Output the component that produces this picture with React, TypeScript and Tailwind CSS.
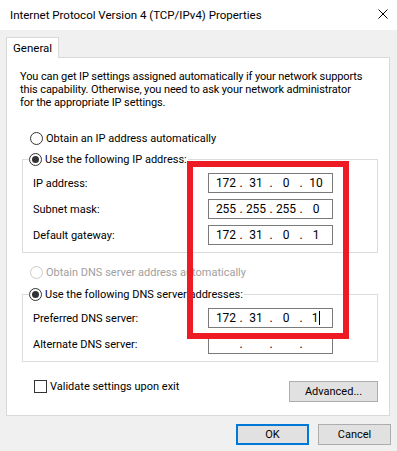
import React from "react";

function Radio({ checked, disabled }: { checked?: boolean; disabled?: boolean }) {
  return (
    <span
      className={`w-[13px] h-[13px] rounded-full border bg-white flex items-center justify-center shrink-0 ${
        disabled ? "border-[#cccccc]" : "border-[#333333]"
      }`}
    >
      {checked && <span className="w-[7px] h-[7px] rounded-full bg-[#333333]" />}
    </span>
  );
}

function IpBox({ parts, cursor }: { parts: string[]; cursor?: boolean }) {
  return (
    <div className="w-[125px] h-[20px] border border-[#7a7a7a] bg-white flex items-center pl-[6px] text-[12px]">
      {parts.map((p, i) => (
        <React.Fragment key={i}>
          {i > 0 && <span className="w-[8px] text-center">.</span>}
          <span className="w-[22px] text-center flex items-center justify-center">
            {p}
            {cursor && i === 3 && <span className="inline-block w-px h-[14px] bg-black ml-[1px]" />}
          </span>
        </React.Fragment>
      ))}
    </div>
  );
}

function Row({ label, parts, cursor }: { label: string; parts: string[]; cursor?: boolean }) {
  return (
    <div className="flex items-center h-[20px] pl-[10px]">
      <span className="w-[175px]">{label}</span>
      <IpBox parts={parts} cursor={cursor} />
    </div>
  );
}

export default function App() {
  return (
    <div
      className="relative w-[397px] h-[451px] overflow-hidden text-[11px] leading-[15px] text-black whitespace-nowrap"
      style={{ fontFamily: 'Roboto, "Noto Sans", sans-serif' }}
    >
      {/* Title bar */}
      <div className="h-[30px] bg-white flex items-center justify-between pl-[10px] pr-[9px]">
        <span className="text-[11.5px]">Internet Protocol Version 4 (TCP/IPv4) Properties</span>
        <svg width="10" height="10" viewBox="0 0 10 10" className="mb-[3px]">
          <path d="M0.5 0.5 L9.5 9.5 M9.5 0.5 L0.5 9.5" stroke="#000" strokeWidth="1" />
        </svg>
      </div>

      {/* Body */}
      <div className="h-[421px] bg-[#f0f0f0] flex flex-col">
        <div className="pt-[7px] pl-[6px] flex">
          <div className="relative z-10 -mb-px w-[53px] h-[21px] border border-b-0 border-[#d9d9d9] bg-white flex items-center pl-[6px] text-[11.5px]">
            General
          </div>
        </div>

        <div className="ml-[6px] w-[384px] h-[359px] border border-[#d9d9d9] bg-white flex flex-col">
          <p className="pt-[12px] pl-[13px] leading-[13px] tracking-[-0.1px]">
            You can get IP settings assigned automatically if your network supports
            <br />
            this capability. Otherwise, you need to ask your network administrator
            <br />
            for the appropriate IP settings.
          </p>

          <div className="mt-[22px] ml-[23px] flex items-center h-[15px] gap-[3px]">
            <Radio />
            <span>Obtain an IP address automatically</span>
          </div>

          <fieldset className="mt-[6px] ml-[15px] w-[356px] border border-[#dcdcdc] pb-[7px]">
            <legend className="ml-[6px] pr-[1px]">
              <span className="flex items-center h-[15px] gap-[3px]">
                <Radio checked />
                <span>Use the following IP address:</span>
              </span>
            </legend>
            <div className="pt-[6px] flex flex-col gap-[6px]">
              <Row label="IP address:" parts={["172", "31", "0", "10"]} />
              <Row label="Subnet mask:" parts={["255", "255", "255", "0"]} />
              <Row label="Default gateway:" parts={["172", "31", "0", "1"]} />
            </div>
          </fieldset>

          <div className="mt-[12px] ml-[23px] flex items-center h-[15px] gap-[3px] text-[#a0a0a0]">
            <Radio disabled />
            <span>Obtain DNS server address automatically</span>
          </div>

          <fieldset className="mt-[7px] ml-[15px] w-[356px] border border-[#dcdcdc] pb-[7px]">
            <legend className="ml-[6px] pr-[1px]">
              <span className="flex items-center h-[15px] gap-[3px]">
                <Radio checked />
                <span>Use the following DNS server addresses:</span>
              </span>
            </legend>
            <div className="pt-[6px] flex flex-col gap-[6px]">
              <Row label="Preferred DNS server:" parts={["172", "31", "0", "1"]} cursor />
              <Row label="Alternate DNS server:" parts={["", "", "", ""]} />
            </div>
          </fieldset>

          <div className="mt-[18px] flex justify-between items-start pr-[11px]">
            <div className="ml-[27px] flex items-center h-[13px] gap-[3px]">
              <span className="w-[13px] h-[13px] border border-[#333333] bg-white" />
              <span>Validate settings upon exit</span>
            </div>
            <div className="mt-[1px] w-[89px] h-[21px] border border-[#adadad] bg-[#e1e1e1] flex items-center justify-center">
              Advanced...
            </div>
          </div>
        </div>

        <div className="mt-[8px] flex justify-end gap-[9px] pr-[6px]">
          <div className="w-[73px] h-[21px] border-2 border-[#0078d7] bg-[#e1e1e1] flex items-center justify-center">
            OK
          </div>
          <div className="w-[73px] h-[21px] border border-[#adadad] bg-[#e1e1e1] flex items-center justify-center">
            Cancel
          </div>
        </div>
      </div>

      {/* Red annotation rectangle */}
      <div className="absolute left-[187px] top-[161px] w-[162px] h-[178px] border-[6px] border-[#ed1c24] pointer-events-none" />
    </div>
  );
}
